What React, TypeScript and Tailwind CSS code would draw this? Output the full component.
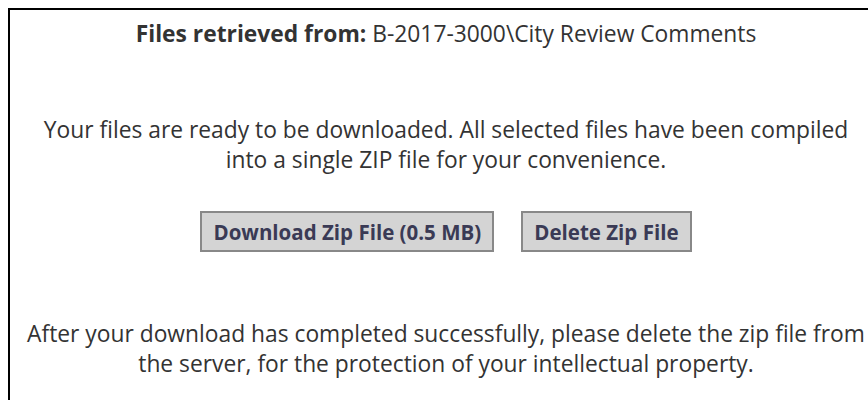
export default function App() {
  return (
    <div
      className="h-[400px] w-[868px] overflow-hidden bg-white pl-2 pt-2 text-[#333]"
      style={{ fontFamily: '"Open Sans", "Noto Sans", sans-serif' }}
    >
      <div className="h-[392px] w-[874px] border-l-2 border-t-2 border-black pt-[9px] text-center text-[22.8px] leading-[30px]">
        <p>
          <span className="font-bold">Files retrieved from:</span> B-2017-3000\City Review Comments
        </p>

        <p className="mt-[66px]">
          Your files are ready to be downloaded. All selected files have been compiled
          <br />
          into a single ZIP file for your convenience.
        </p>

        <div className="mt-[36px] flex justify-center gap-[27px]">
          <button className="h-[41px] border-2 border-[#888] bg-[#d4d4d4] px-[11px] text-[20.5px] font-bold text-[#3a3a55]">
            Download Zip File (0.5 MB)
          </button>
          <button className="h-[41px] border-2 border-[#888] bg-[#d4d4d4] px-[11px] text-[20.5px] font-bold text-[#3a3a55]">
            Delete Zip File
          </button>
        </div>

        <p className="mt-[67px]">
          After your download has completed successfully, please delete the zip file from
          <br />
          the server, for the protection of your intellectual property.
        </p>
      </div>
    </div>
  );
}
